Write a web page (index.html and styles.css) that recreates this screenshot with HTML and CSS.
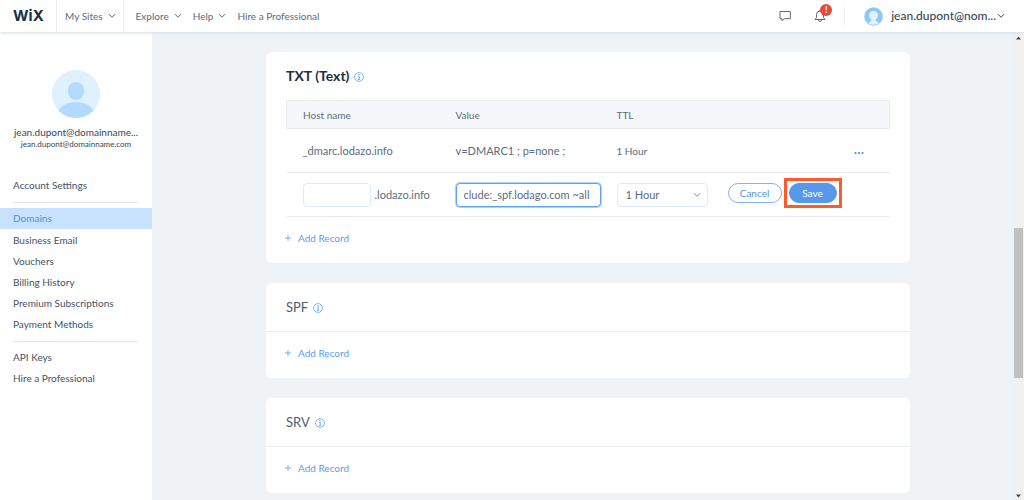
FILE: index.html
```html
<!DOCTYPE html>
<html lang="en">
<head>
<meta charset="utf-8">
<title>Domains</title>
<link rel="stylesheet" href="styles.css">
</head>
<body>
<svg class="defs" aria-hidden="true">
  <symbol id="chevron" viewBox="0 0 8 6"><path d="M1 1.2 4 4.3 7 1.2" fill="none" stroke="currentColor"/></symbol>
  <symbol id="info" viewBox="0 0 10 10"><circle cx="5" cy="5" r="4.4" fill="none" stroke="currentColor" stroke-width=".8"/><path d="M4.200 4.300h1v3M4 7.400h2.200" fill="none" stroke="currentColor" stroke-width=".9"/><circle cx="5" cy="2.7" r=".7" fill="currentColor"/></symbol>
  <symbol id="plus" viewBox="0 0 8 8"><path d="M4 1v6M1 4h6" fill="none" stroke="currentColor" stroke-width=".8"/></symbol>
</svg>
<header class="topbar">
  <a class="logo" href="#">WiX</a>
  <nav class="topnav" aria-label="Main">
    <button class="nav-item boxed">My Sites <svg class="chev"><use href="#chevron"/></svg></button>
    <button class="nav-item">Explore <svg class="chev"><use href="#chevron"/></svg></button>
    <button class="nav-item">Help <svg class="chev"><use href="#chevron"/></svg></button>
    <a class="nav-item" href="#">Hire a Professional</a>
  </nav>
  <div class="tools">
    <button class="tool" aria-label="Messages"><svg width="12" height="12" viewBox="0 0 12 12"><path d="M1 1.5h10.3v7.2H5.2L3 10.800V8.700H1z" fill="none" stroke="currentColor" stroke-linejoin="round"/></svg></button>
    <button class="tool bell" aria-label="Notifications"><svg width="12" height="14" viewBox="0 0 12 14"><path d="M1 10.500h10L9.500 8.500V5.500a3.500 3.500 0 0 0-7 0v3zM4.500 11a1.500 1.500 0 0 0 3 0M6 2V.8" fill="none" stroke="currentColor" stroke-linejoin="round"/></svg><span class="badge">!</span></button>
    <button class="account"><svg width="19" height="19" viewBox="0 0 19 19"><circle cx="9.500" cy="9.500" r="9.300" fill="#8fc6fb"/><path d="M9.500 4c-3.600 0-4.600 2.500-4.300 5 .2 1.700 1.100 3 2.300 3.700v1.100l-3.300 2.100c3 2.400 7.600 2.400 10.600 0l-3.300-2.100v-1.100c1.200-.7 2.100-2 2.300-3.700.3-2.500-.7-5-4.300-5z" fill="#e3f2ff"/></svg><span>jean.dupont@nom...</span><svg class="chev"><use href="#chevron"/></svg></button>
  </div>
</header>
<div class="page">
  <aside class="sidebar">
    <div class="profile">
      <svg width="48" height="48" viewBox="0 0 48 48"><defs><clipPath id="disc"><circle cx="24" cy="24" r="24"/></clipPath></defs><circle cx="24" cy="24" r="24" fill="#dff0ff"/><g clip-path="url(#disc)" fill="#b3dbff"><rect x="16" y="12" width="16" height="18" rx="8"/><ellipse cx="24" cy="46" rx="19" ry="14"/></g></svg>
      <strong class="name">jean.dupont@domainname...</strong>
      <span class="mail">jean.dupont@domainname.com</span>
    </div>
    <nav class="menu" aria-label="Account">
      <a href="#">Account Settings</a>
      <hr>
      <a class="active" href="#" aria-current="page">Domains</a>
      <a href="#">Business Email</a>
      <a href="#">Vouchers</a>
      <a href="#">Billing History</a>
      <a href="#">Premium Subscriptions</a>
      <a href="#">Payment Methods</a>
      <hr>
      <a href="#">API Keys</a>
      <a href="#">Hire a Professional</a>
    </nav>
  </aside>
  <main class="content">
    <section class="card records">
      <h2>TXT (Text) <svg class="info"><use href="#info"/></svg></h2>
      <table>
        <colgroup><col class="c-host"><col class="c-value"><col class="c-ttl"><col></colgroup>
        <thead><tr><th>Host name</th><th>Value</th><th>TTL</th><th></th></tr></thead>
        <tbody>
          <tr><td>_dmarc.lodazo.info</td><td>v=DMARC1 ; p=none ;</td><td class="small">1 Hour</td><td class="more-cell"><button class="more" aria-label="More actions"><svg width="10" height="4" viewBox="0 0 10 4"><g fill="currentColor"><circle cx="1.500" cy="2" r="1.100"/><circle cx="5" cy="2" r="1.100"/><circle cx="8.500" cy="2" r="1.100"/></g></svg></button></td></tr>
          <tr>
            <td><div class="host"><input class="host-input" aria-label="Host name"><span>.lodazo.info</span></div></td>
            <td><input class="value-input" aria-label="Value" value="clude:_spf.lodago.com ~all"></td>
            <td><div class="select"><select aria-label="TTL"><option>1 Hour</option></select><svg class="chev"><use href="#chevron"/></svg></div></td>
            <td><div class="actions"><button class="pill">Cancel</button><span class="highlight"><button class="pill primary">Save</button></span></div></td>
          </tr>
        </tbody>
      </table>
      <button class="add"><svg><use href="#plus"/></svg>Add Record</button>
    </section>
    <section class="card">
      <h2>SPF <svg class="info"><use href="#info"/></svg></h2>
      <button class="add"><svg><use href="#plus"/></svg>Add Record</button>
    </section>
    <section class="card">
      <h2>SRV <svg class="info"><use href="#info"/></svg></h2>
      <button class="add"><svg><use href="#plus"/></svg>Add Record</button>
    </section>
  </main>
  <div class="scrollbar" aria-hidden="true"><svg width="7" height="4" viewBox="0 0 7 4"><path d="M1 3.500 3.500.5 6 3.500z" fill="#32495f"/></svg><div class="track"><div class="thumb"></div></div><svg width="7" height="4" viewBox="0 0 7 4"><path d="M1 .5h5L3.500 3.500z" fill="#32495f"/></svg></div>
</div>
</body>
</html>
```
FILE: styles.css
```css
* { box-sizing: border-box; }
body {
  margin: 0;
  height: 100vh;
  display: flex;
  flex-direction: column;
  overflow: hidden;
  background: #eff3f6;
  color: #5b6c80;
  font: 10px/16px Lato, "Noto Sans", sans-serif;
}
button, input, select { font: inherit; color: inherit; }
button { border: 0; padding: 0; background: none; cursor: pointer; }
a { color: inherit; text-decoration: none; }
.defs { position: absolute; width: 0; height: 0; }
.chev { width: 8px; height: 6px; flex: none; }

.topbar {
  display: flex;
  flex: none;
  height: 32px;
  background: #fff;
  box-shadow: 0 1px 3px #d3dbe3;
  z-index: 1;
}
.logo {
  display: flex;
  align-items: center;
  width: 57px;
  padding-left: 13px;
  border-right: 1px solid #e9edf1;
  color: #1c2f42;
  font: bold 15px/32px Inter, sans-serif;
}
.topnav { display: flex; flex: 1; }
.nav-item {
  display: flex;
  align-items: center;
  gap: 5px;
  margin-right: 11px;
  white-space: nowrap;
}
.nav-item.boxed { padding: 0 7px 0 8px; border-right: 1px solid #e9edf1; margin-right: 12px; }
.tools { display: flex; align-items: center; padding-right: 19px; }
.tool { display: flex; margin-right: 23px; }
.bell { position: relative; margin-right: 18px; }
.badge {
  position: absolute;
  top: -5px;
  right: -6px;
  width: 12px;
  height: 12px;
  border-radius: 50%;
  background: #e8493d;
  color: #fff;
  font: bold 9px/12px Lato, sans-serif;
  text-align: center;
}
.account {
  display: flex;
  align-items: center;
  gap: 8px;
  padding-left: 19px;
  border-left: 1px solid #eceff3;
  color: #34485c;
  font: 500 12px/16px Lato, sans-serif;
}
.account .chev { margin-left: -7px; }

.page { display: flex; flex: 1; min-height: 0; }
.sidebar { flex: none; width: 152px; background: #fff; }
.profile {
  display: flex;
  flex-direction: column;
  align-items: center;
  padding: 38px 0 26px;
  color: #32465a;
}
.name { margin-top: 8px; font-size: 10px; line-height: 13px; font-weight: 400; }
.mail { font-size: 8px; line-height: 10px; }
.menu { display: flex; flex-direction: column; }
.menu a { padding: 0 13px; line-height: 21px; color: #3f5368; }
.menu hr { width: 125px; margin: 6px 13px 5px; border: 0; border-top: 1px solid #dfe5eb; }
.menu .active { margin-bottom: 1px; background: #c6e2ff; color: #4b91dd; }

.content {
  flex: 1;
  display: flex;
  flex-direction: column;
  gap: 20px;
  padding: 20px 103px 7px 114px;
}
.card { flex: none; background: #fff; border-radius: 6px; }
.card h2 {
  display: flex;
  align-items: center;
  gap: 5px;
  height: 49px;
  margin: 0;
  padding-left: 20px;
  border-bottom: 1px solid #e8edf2;
  color: #4b5e72;
  font-size: 13px;
  font-weight: 400;
}
.card .info { width: 10px; height: 10px; margin-top: 2px; color: #5aa4f2; }
.records { padding: 0 20px; }
.records h2 { height: 48px; padding: 0; border: 0; color: #20303f; font-size: 14px; font-weight: 700; }
.add {
  display: flex;
  align-items: center;
  gap: 6px;
  height: 46px;
  padding: 0 0 4px 18px;
  color: #5aa0f0;
}
.records .add { padding-left: 0; margin-left: -2px; }
.add svg { width: 8px; height: 8px; }

table { width: 100%; border-collapse: collapse; table-layout: fixed; }
.c-host { width: 153px; }
.c-value { width: 161px; }
.c-ttl { width: 111px; }
th, td { height: 44px; padding: 0 0 0 16px; text-align: left; font-size: 11px; }
th { height: 28px; background: #f6f7fa; font-weight: 400; font-size: 10px; }
thead { border: 1px solid #e7ebef; }
tbody tr { border-bottom: 1px solid #e7ecf1; }
td.small { font-size: 10px; }
.more-cell { text-align: right; padding-right: 26px; }
.more { color: #3a8ee8; }
.host { display: flex; align-items: center; gap: 4px; }
input, select {
  height: 24px;
  border: 1px solid #dcecfb;
  border-radius: 4px;
  background: #fff;
  outline: 0;
}
.host-input { width: 68px; }
.value-input { width: 145px; padding: 0 7px; border-color: #5ba5f5; box-shadow: 0 0 0 1px #a9d3ff; }
.select { display: grid; align-items: center; width: 91px; }
.select select { grid-area: 1 / 1; width: 100%; padding: 0 8px; appearance: none; }
.select .chev { grid-area: 1 / 1; justify-self: end; margin-right: 7px; color: #4e9cf0; pointer-events: none; }
.actions { display: flex; align-items: center; gap: 2px; padding-bottom: 4px; }
.pill {
  display: block;
  width: 54px;
  height: 20px;
  border: 1px solid #7fb4f0;
  border-radius: 10px;
  color: #4f98ea;
  font-size: 10px;
  line-height: 18px;
}
.primary { width: 48px; background: #5699ec; border-color: #5699ec; color: #fff; }
.highlight { padding: 2px; border: 3px solid #fd5a2f; }

.scrollbar {
  flex: none;
  display: flex;
  flex-direction: column;
  align-items: center;
  width: 11px;
  padding: 4px 0 2px;
  background: #f1f1f1;
}
.track { flex: 1; width: 100%; padding: 188px 1px 0; }
.thumb { height: 150px; background: #c1c1c1; }
```
